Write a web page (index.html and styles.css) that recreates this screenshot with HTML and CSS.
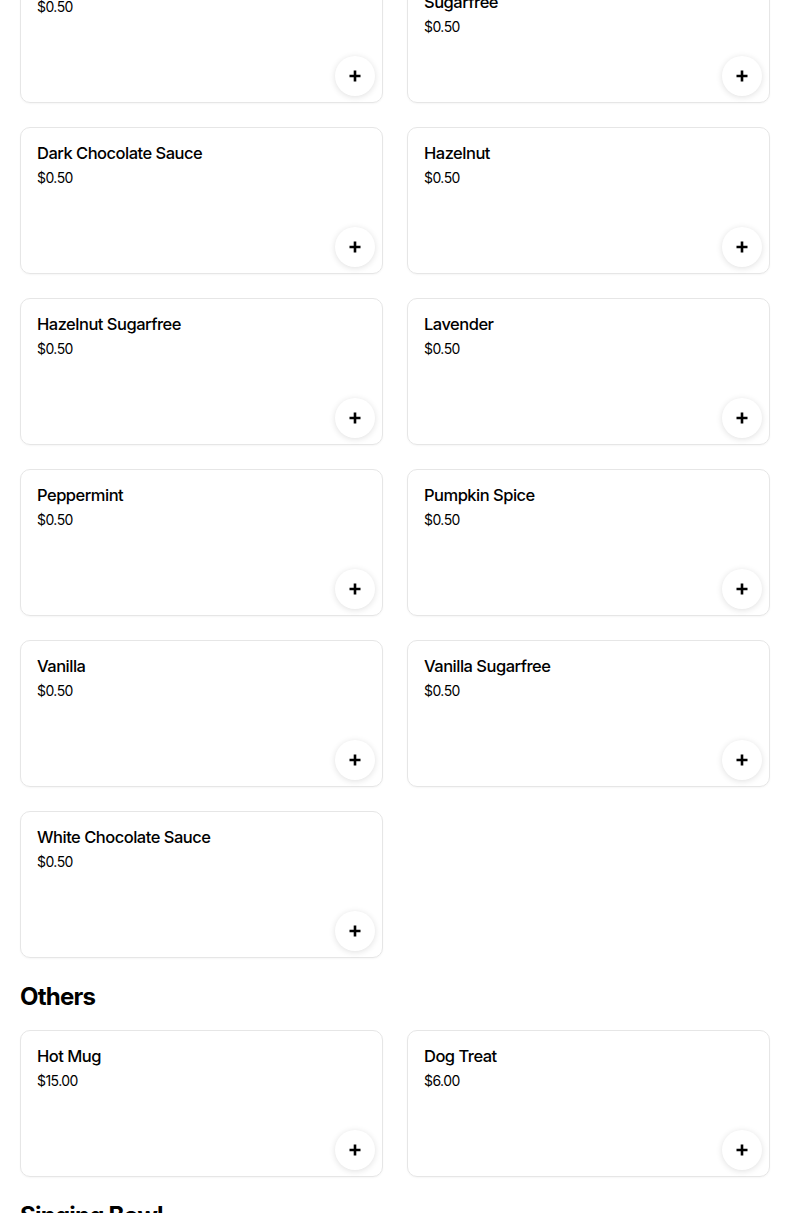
FILE: index.html
```html
<!DOCTYPE html>
<html lang="en">
<head>
<meta charset="utf-8">
<title>Menu</title>
<link rel="stylesheet" href="styles.css">
</head>
<body>
<main class="page">
  <section class="section section-first">
    <div class="grid">
      <div class="card"><div class="title">Caramel Sauce</div><div class="price">$0.50</div><button class="add" aria-label="Add"><svg viewBox="0 0 16 16" width="16" height="16"><path d="M8 2.5v11M2.5 8h11" stroke="#000" stroke-width="2.6" fill="none"/></svg></button></div>
      <div class="card"><div class="title">Cinnamon Dolce Brown Sugar Syrup Sugarfree</div><div class="price">$0.50</div><button class="add" aria-label="Add"><svg viewBox="0 0 16 16" width="16" height="16"><path d="M8 2.5v11M2.5 8h11" stroke="#000" stroke-width="2.6" fill="none"/></svg></button></div>
      <div class="card"><div class="title">Dark Chocolate Sauce</div><div class="price">$0.50</div><button class="add" aria-label="Add"><svg viewBox="0 0 16 16" width="16" height="16"><path d="M8 2.5v11M2.5 8h11" stroke="#000" stroke-width="2.6" fill="none"/></svg></button></div>
      <div class="card"><div class="title">Hazelnut</div><div class="price">$0.50</div><button class="add" aria-label="Add"><svg viewBox="0 0 16 16" width="16" height="16"><path d="M8 2.5v11M2.5 8h11" stroke="#000" stroke-width="2.6" fill="none"/></svg></button></div>
      <div class="card"><div class="title">Hazelnut Sugarfree</div><div class="price">$0.50</div><button class="add" aria-label="Add"><svg viewBox="0 0 16 16" width="16" height="16"><path d="M8 2.5v11M2.5 8h11" stroke="#000" stroke-width="2.6" fill="none"/></svg></button></div>
      <div class="card"><div class="title">Lavender</div><div class="price">$0.50</div><button class="add" aria-label="Add"><svg viewBox="0 0 16 16" width="16" height="16"><path d="M8 2.5v11M2.5 8h11" stroke="#000" stroke-width="2.6" fill="none"/></svg></button></div>
      <div class="card"><div class="title">Peppermint</div><div class="price">$0.50</div><button class="add" aria-label="Add"><svg viewBox="0 0 16 16" width="16" height="16"><path d="M8 2.5v11M2.5 8h11" stroke="#000" stroke-width="2.6" fill="none"/></svg></button></div>
      <div class="card"><div class="title">Pumpkin Spice</div><div class="price">$0.50</div><button class="add" aria-label="Add"><svg viewBox="0 0 16 16" width="16" height="16"><path d="M8 2.5v11M2.5 8h11" stroke="#000" stroke-width="2.6" fill="none"/></svg></button></div>
      <div class="card"><div class="title">Vanilla</div><div class="price">$0.50</div><button class="add" aria-label="Add"><svg viewBox="0 0 16 16" width="16" height="16"><path d="M8 2.5v11M2.5 8h11" stroke="#000" stroke-width="2.6" fill="none"/></svg></button></div>
      <div class="card"><div class="title">Vanilla Sugarfree</div><div class="price">$0.50</div><button class="add" aria-label="Add"><svg viewBox="0 0 16 16" width="16" height="16"><path d="M8 2.5v11M2.5 8h11" stroke="#000" stroke-width="2.6" fill="none"/></svg></button></div>
      <div class="card"><div class="title">White Chocolate Sauce</div><div class="price">$0.50</div><button class="add" aria-label="Add"><svg viewBox="0 0 16 16" width="16" height="16"><path d="M8 2.5v11M2.5 8h11" stroke="#000" stroke-width="2.6" fill="none"/></svg></button></div>
    </div>
  </section>
  <section class="section">
    <h2 class="heading">Others</h2>
    <div class="grid">
      <div class="card"><div class="title">Hot Mug</div><div class="price">$15.00</div><button class="add" aria-label="Add"><svg viewBox="0 0 16 16" width="16" height="16"><path d="M8 2.5v11M2.5 8h11" stroke="#000" stroke-width="2.6" fill="none"/></svg></button></div>
      <div class="card"><div class="title">Dog Treat</div><div class="price">$6.00</div><button class="add" aria-label="Add"><svg viewBox="0 0 16 16" width="16" height="16"><path d="M8 2.5v11M2.5 8h11" stroke="#000" stroke-width="2.6" fill="none"/></svg></button></div>
    </div>
  </section>
  <section class="section">
    <h2 class="heading">Singing Bowl</h2>
  </section>
</main>
</body>
</html>
```
FILE: styles.css
```css
* { box-sizing: border-box; }
html, body { margin: 0; padding: 0; background: #fff; }
body {
  font-family: Inter, "Noto Sans", "Liberation Sans", sans-serif;
  color: #000;
  overflow: hidden;
}
.page {
  width: 750px;
  margin-left: 20px;
}
.section-first { margin-top: -44px; }
.section { margin-bottom: 23px; }
.heading {
  margin: 0 0 17px;
  font-size: 24px;
  line-height: 32px;
  font-weight: 700;
  letter-spacing: -0.75px;
}
.grid {
  display: grid;
  grid-template-columns: 363px 363px;
  gap: 24px;
}
.card {
  height: 147px;
  border: 1px solid #e6e6e6;
  border-radius: 10px;
  box-shadow: 0 1px 2px rgba(0,0,0,0.04);
  padding: 15px 7px 6px 16px;
  display: flex;
  flex-direction: column;
}
.title {
  font-size: 16.5px;
  line-height: 20px;
  font-weight: 500;
  letter-spacing: -0.5px;
  padding-right: 9px;
  max-width: 330px;
}
.price {
  margin-top: 5px;
  font-size: 14px;
  line-height: 20px;
  color: #000;
  letter-spacing: -0.55px;
}
.add {
  margin-top: auto;
  align-self: flex-end;
  width: 40px;
  height: 40px;
  border-radius: 50%;
  border: none;
  background: #fff;
  box-shadow: 0 1px 6px rgba(0,0,0,0.13);
  display: flex;
  align-items: center;
  justify-content: center;
  padding: 0;
}
.add svg { display: block; }
```
